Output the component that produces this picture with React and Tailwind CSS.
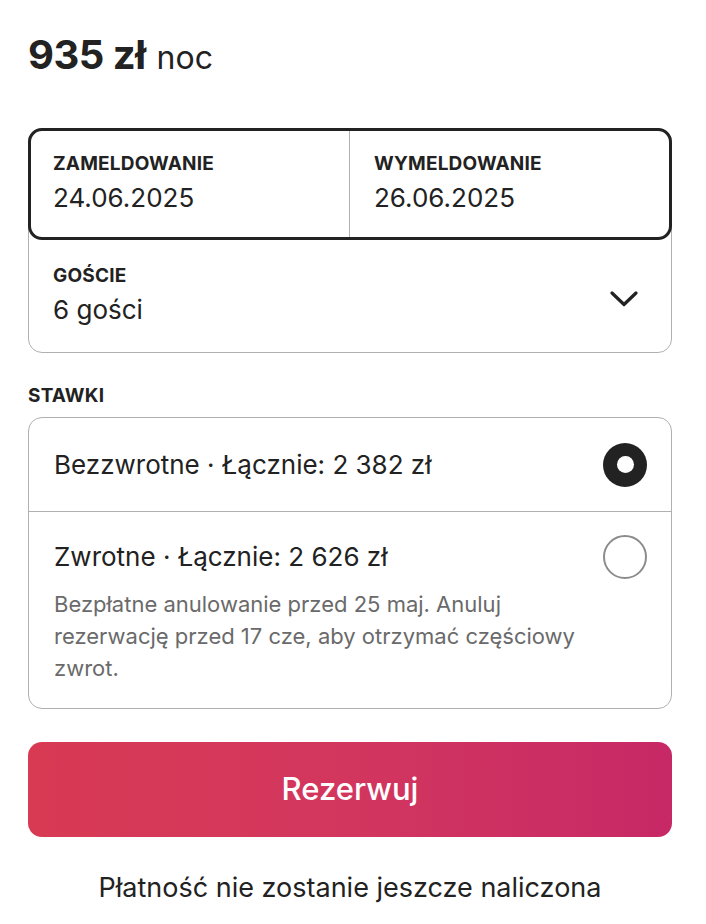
import React, { useState } from "react";

const Radio = ({ selected }) =>
  selected ? (
    <span className="flex h-[44px] w-[44px] shrink-0 items-center justify-center rounded-full bg-[#222222]">
      <span className="h-[17px] w-[17px] rounded-full bg-white" />
    </span>
  ) : (
    <span className="h-[44px] w-[44px] shrink-0 rounded-full border-2 border-[#8c8c8c] bg-white" />
  );

const FieldLabel = ({ children }) => (
  <div className="text-[19px] font-bold uppercase leading-[24px] tracking-[0.2px]">{children}</div>
);

export default function App() {
  const [rate, setRate] = useState("bezzwrotne");

  return (
    <div
      className="min-h-[924px] bg-white pl-[28px] pr-[34px] pt-[31px] text-[#222222]"
      style={{ fontFamily: "Inter, 'Noto Sans', sans-serif" }}
    >
      {/* Price */}
      <div className="flex items-baseline gap-[11px] leading-[48px]">
        <span className="text-[40px] font-bold tracking-[-0.5px]">935 zł</span>
        <span className="text-[32px]">noc</span>
      </div>

      {/* Dates + guests */}
      <div className="mt-[46px] rounded-[14px] border border-[#b0b0b0]">
        <div className="-m-px grid h-[112px] grid-cols-2 rounded-[14px] border-[3px] border-[#222222]">
          <div className="border-r border-[#b0b0b0] pl-[22px] pt-[21px]">
            <FieldLabel>Zameldowanie</FieldLabel>
            <div className="mt-[4px] text-[26px] leading-[36px]">24.06.2025</div>
          </div>
          <div className="pl-[24px] pt-[21px]">
            <FieldLabel>Wymeldowanie</FieldLabel>
            <div className="mt-[4px] text-[26px] leading-[36px]">26.06.2025</div>
          </div>
        </div>
        <button type="button" className="flex h-[113px] w-full items-start justify-between px-[24px] pt-[25px] text-left">
          <div>
            <FieldLabel>Goście</FieldLabel>
            <div className="mt-[4px] text-[26px] leading-[36px]">6 gości</div>
          </div>
          <svg width="28" height="16" viewBox="0 0 28 16" fill="none" stroke="#222222" strokeWidth="3.2" strokeLinecap="round" strokeLinejoin="round" className="mr-[9px] mt-[27px]">
            <path d="M2 2 14 13.5 26 2" />
          </svg>
        </button>
      </div>

      {/* Rates */}
      <div className="mt-[31px]">
        <FieldLabel>Stawki</FieldLabel>
      </div>
      <div className="mt-[9px] overflow-hidden rounded-[14px] border border-[#b0b0b0]">
        <button
          type="button"
          onClick={() => setRate("bezzwrotne")}
          className="flex h-[94px] w-full items-center justify-between border-b border-[#b0b0b0] pl-[25px] pr-[24px] text-left"
        >
          <span className="text-[26px] leading-[36px]">Bezzwrotne · Łącznie: 2 382 zł</span>
          <Radio selected={rate === "bezzwrotne"} />
        </button>
        <button
          type="button"
          onClick={() => setRate("zwrotne")}
          className="block w-full pl-[25px] pr-[24px] pt-[23px] pb-[24px] text-left"
        >
          <div className="flex items-center justify-between">
            <span className="text-[26px] leading-[36px]">Zwrotne · Łącznie: 2 626 zł</span>
            <Radio selected={rate === "zwrotne"} />
          </div>
          <p className="mt-[9px] w-[600px] text-[22px] leading-[32px] text-[#6a6a6a]">
            Bezpłatne anulowanie przed 25 maj. Anuluj
            <br />
            rezerwację przed 17 cze, aby otrzymać częściowy
            <br />
            zwrot.
          </p>
        </button>
      </div>

      {/* Reserve */}
      <button
        type="button"
        className="mt-[33px] flex h-[95px] w-full items-center justify-center rounded-[14px] bg-gradient-to-r from-[#d83a53] via-[#d2365e] to-[#c72866] text-[31px] font-medium text-white"
      >
        Rezerwuj
      </button>
      <p className="mt-[35px] text-center text-[27px] leading-[32px]">Płatność nie zostanie jeszcze naliczona</p>
    </div>
  );
}
